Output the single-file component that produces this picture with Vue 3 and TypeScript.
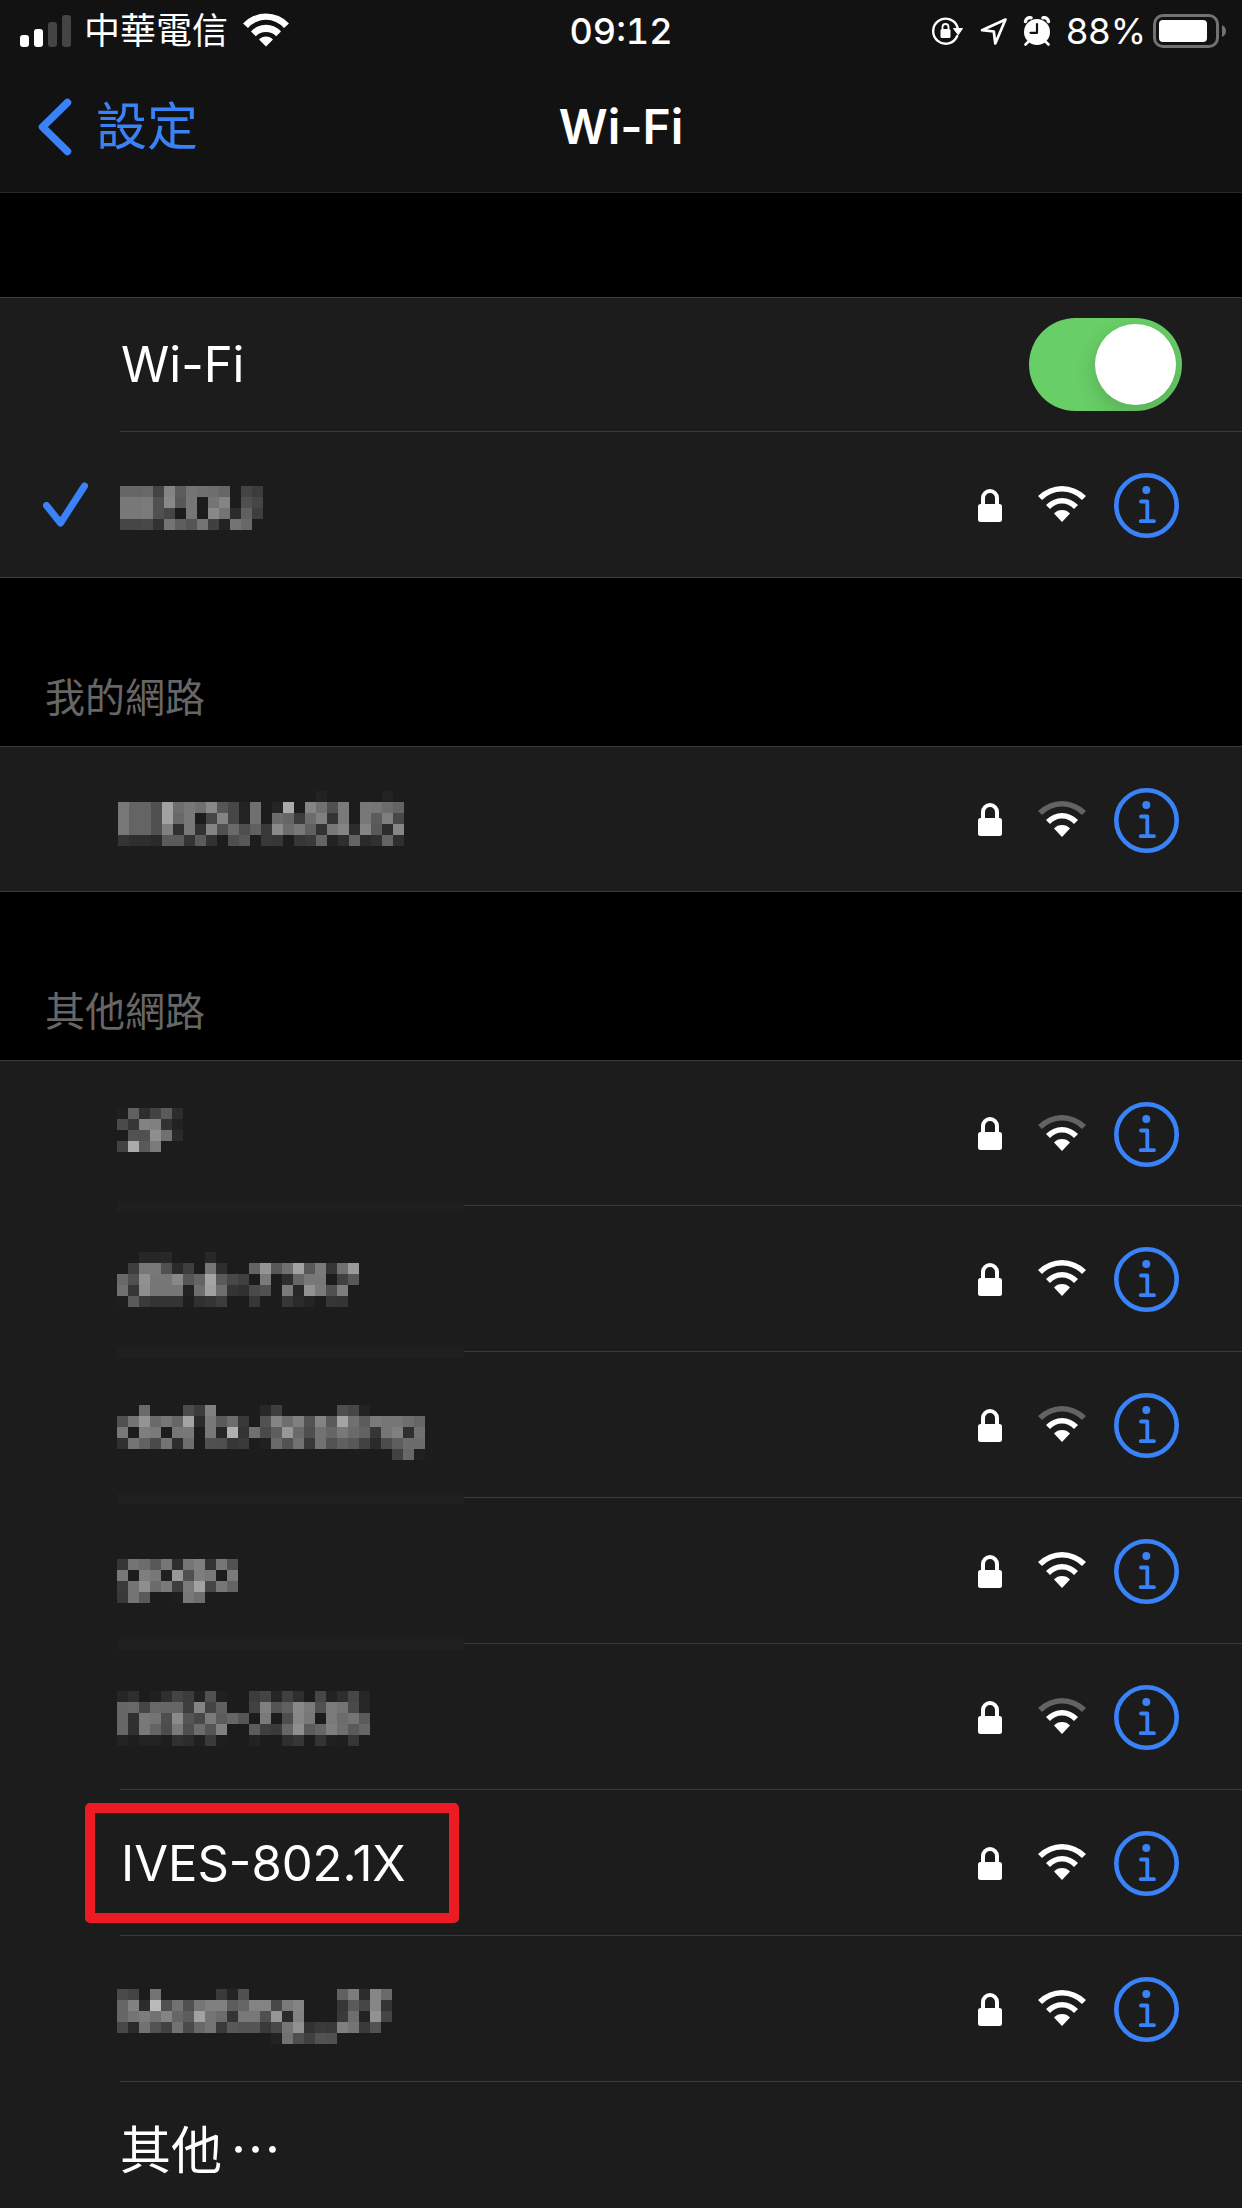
<script setup lang="ts">
import { ref } from 'vue'

interface Mosaic {
  x: number
  y: number
  rows: string[]
}

interface Cell {
  x: number
  y: number
  fill: string
}

interface Network {
  id: string
  name?: string
  mosaic?: Mosaic
  weak?: boolean
  current?: boolean
  marked?: boolean
  smudged?: boolean
}

interface Group {
  id: string
  title?: string
  networks: Network[]
}

const CELL = 11
const wifiOn = ref(true)

// Each mosaic row lists grey levels in hex; "1c" is the row background.
function cells(m: Mosaic): Cell[] {
  const out: Cell[] = []
  m.rows.forEach((line, r) => {
    line.split(' ').forEach((v, c) => {
      if (v !== '1c') out.push({ x: m.x + c * CELL, y: m.y + r * CELL, fill: `#${v}${v}${v}` })
    })
  })
  return out
}

function mosaicWidth(m: Mosaic): number {
  return m.x + Math.max(...m.rows.map((r) => r.split(' ').length)) * CELL
}

const groups: Group[] = [
  {
    id: 'current',
    networks: [
      {
        id: 'n0',
        current: true,
        mosaic: {
          x: 3,
          y: 25,
          rows: [
            '66 66 68 44 84 5c 74 70 6e 66 1c 44 3c',
            '78 78 7a 50 88 58 76 1c 74 84 1c 50 46',
            '78 78 7a 50 46 1c 76 1c 88 74 2c 60 3e',
            '46 46 48 32 74 5e 54 74 40 22 74 68 1c',
          ],
        },
      },
    ],
  },
  {
    id: 'mine',
    title: '我的網路',
    networks: [
      {
        id: 'n1',
        weak: true,
        mosaic: {
          x: 1,
          y: 16,
          rows: [
            '1c 1c 1c 1c 1c 1c 1c 1c 1c 1c 1c 1c 1c 1c 1c 1c 1c 1c 22 1c 1c 1c 1c 1c 22 1c',
            '78 64 64 50 a2 6e 78 70 88 56 46 22 70 1c 24 aa 1c 84 70 50 7a 1c 78 76 6c 64',
            '78 64 64 50 a2 68 78 1c 46 84 46 22 70 1c 6c 66 3c 6c 80 34 7a 1c 78 5c 7e 48',
            '78 64 64 50 80 30 78 32 84 50 6a 4e 60 38 8a 6c 78 60 32 78 84 2c 84 58 2c 86',
            '34 2e 2e 2a 5a 5a 34 5a 32 1c 4e 58 1c 38 36 1c 36 3a 64 22 2e 64 2a 30 64 2e',
          ],
        },
      },
    ],
  },
  {
    id: 'others',
    title: '其他網路',
    networks: [
      {
        id: 'n2',
        weak: true,
        smudged: true,
        mosaic: {
          x: 0,
          y: 19,
          rows: [
            '1f 60 2e 42 5a 2c',
            '4a 36 82 80 32 22',
            '1c 52 50 8e 70 2a',
            '42 aa 5a 7a 1c 1c',
          ],
        },
      },
      {
        id: 'n3',
        smudged: true,
        mosaic: {
          x: 0,
          y: 17,
          rows: [
            '1c 1c 26 26 28 1c 1c 1c 28',
            '1c 3e 78 78 50 2a 3e 1c 76 2e 1c 1c 64 94 58 70 a2 58 7a 36 70 9a',
            '68 50 90 76 76 88 56 64 a4 5a 48 40 1c 7a 1c 2e 66 78 78 1c 40 58',
            '70 36 8e 76 76 76 22 6e a0 6e 34 30 4a 50 1c 7a 28 92 7a 50 7e 1c',
            '1e 5a 3a 34 34 34 1e 30 34 3c 1c 1c 36 1c 1c 36 2a 24 1c 36 34 1c',
          ],
        },
      },
      {
        id: 'n4',
        weak: true,
        smudged: true,
        mosaic: {
          x: 0,
          y: 24,
          rows: [
            '1c 1c 6a 1c 1c 1c 4c 3c 80 1c 1c 1c 1c 28 3e 1c 1c 1c 1c 1c 4e 46 22',
            '50 74 94 6a 76 66 a4 2a 78 5a 6c 38 1c 52 84 6e 80 52 84 5a a4 70 5c 7a 76 76 6e 66',
            '78 1c 7e 7a 1c 76 78 1c 78 26 b0 34 70 4a 5e 98 6a 4e 72 66 78 6a 62 36 76 80 30 70',
            '30 74 62 4a 74 2e 6e 1c 50 4e 36 3a 1c 20 6a 52 72 38 72 52 60 58 42 2a 4c 5e 6c 6c',
            '1c 1c 1c 1c 1c 1c 1c 1c 1c 1c 1c 1c 1c 1c 1c 1c 1c 1c 1c 1c 1c 1c 1c 1c 1c 42 68 20',
          ],
        },
      },
      {
        id: 'n5',
        smudged: true,
        mosaic: {
          x: 0,
          y: 32,
          rows: [
            '36 74 6c 58 76 2e 76 80 34 76 52',
            '78 1c 7e 78 20 98 50 7e 78 1c 7a',
            '3a 74 8e 6c 7a 3e 7a a2 46 76 64',
            '38 74 5a 1c 1c 1e 78 6e 1c 1c 1c',
          ],
        },
      },
      {
        id: 'n6',
        weak: true,
        mosaic: {
          x: 0,
          y: 18,
          rows: [
            '26 2e 1c 20 2e 44 3c 22 50 20 1c 1c 3c 44 26 40 2e 1c 46 22 2e 46 26',
            '66 68 46 68 66 66 3e 84 44 60 1c 1c 42 80 54 60 88 7a 50 7a 74 4a 26',
            '66 30 78 74 4e 8a 54 48 7a 5c 66 56 1c 7a 1c 4e 86 78 1c 7a 6c 74 5a',
            '66 30 78 64 4c 7a 4e 6c 54 80 1c 1c 5c 3e 3a 66 8e 5c 66 7e 6e 5a 66',
            '22 1e 22 22 1e 30 2c 20 3a 1e 1c 1c 22 1c 1c 2e 36 1c 34 20 1e 36 1c',
          ],
        },
      },
      { id: 'n7', name: 'IVES-802.1X', marked: true },
      {
        id: 'n8',
        mosaic: {
          x: 0,
          y: 24,
          rows: [
            '4a 44 1c 74 1c 1c 1c 1c 1c 3a 24 50 1c 1c 1c 1c 1c 1c 1c 1c 60 7c 2c 86 6a',
            '66 82 2c ba 50 72 50 76 80 80 5c 66 84 84 48 7a 84 1c 1c 1c 36 5a 46 86 34',
            '66 74 7c 72 84 66 5c a2 74 6c 34 78 78 50 96 2a 82 1c 1c 1c 3a 6e 22 92 44',
            '48 2a 72 52 42 72 4a 68 74 3a 58 54 54 3a 48 76 90 32 3a 38 80 74 3a 52 1c',
            '1c 1c 1c 1c 1c 1c 1c 1c 1c 1c 1c 1c 1c 1c 22 72 4e 40 52 50',
          ],
        },
      },
    ],
  },
]
</script>

<template>
  <div class="screen" lang="zh-TW">
    <header class="top">
      <div class="status">
        <div class="status-left">
          <svg class="signal" width="52" height="32" viewBox="0 0 52 32" aria-hidden="true">
            <rect x="0" y="20" width="9" height="12" rx="3" fill="#fff" />
            <rect x="14" y="14" width="9" height="18" rx="3" fill="#fff" />
            <rect x="28" y="7" width="9" height="25" rx="3" fill="#444" />
            <rect x="42" y="0" width="9" height="32" rx="3" fill="#444" />
          </svg>
          <span class="carrier">中華電信</span>
          <svg width="46" height="36" viewBox="0 0 46 36" fill="#fff" aria-hidden="true">
            <path d="M0 10.5A31.5 31.5 0 0 1 46 10.5L41 15A24 24 0 0 0 5 15Z" />
            <path d="M8 18.5A20 20 0 0 1 38 18.5L33.2 23.2A14.5 14.5 0 0 0 12.8 23.2Z" />
            <path d="M16 26.5A9.5 9.5 0 0 1 30 26.5L23 33.5Z" />
          </svg>
        </div>
        <time class="clock">09:12</time>
        <div class="status-right">
          <svg class="rotation" width="32" height="30" viewBox="0 0 32 30" aria-hidden="true">
            <path d="M26.2 20A12.5 12.5 0 1 1 26.6 11.5" fill="none" stroke="#fff" stroke-width="2.4" stroke-linecap="round" />
            <path d="M22.5 12.5H31.5L27.2 18.8Z" fill="#fff" stroke="#fff" stroke-linejoin="round" />
            <rect x="9.5" y="13" width="10" height="9" rx="1.5" fill="#fff" />
            <path d="M11.5 13.5V11a3 3 0 0 1 6 0V13.5" fill="none" stroke="#fff" stroke-width="1.8" />
          </svg>
          <svg class="location" width="28" height="29" viewBox="0 0 28 29" aria-hidden="true">
            <path d="M25.5 2.5L2 13.2L13.8 14.5L15.3 26.5Z" fill="none" stroke="#fff" stroke-width="2.7" stroke-linejoin="round" />
          </svg>
          <svg class="alarm" width="28" height="30" viewBox="0 0 28 30" aria-hidden="true">
            <circle cx="14" cy="16" r="13" fill="#fff" />
            <path d="M2.5 5.5A4.5 4.5 0 0 1 8 1.8M25.5 5.5A4.5 4.5 0 0 0 20 1.8" fill="none" stroke="#fff" stroke-width="3.4" stroke-linecap="round" />
            <path d="M5 26L2.5 28.5M23 26L25.5 28.5" stroke="#fff" stroke-width="2.6" stroke-linecap="round" />
            <path d="M14 8V16.8H7.5" fill="none" stroke="#121212" stroke-width="2.2" stroke-linecap="round" stroke-linejoin="round" />
          </svg>
          <span class="percent">88%</span>
          <svg width="73" height="34" viewBox="0 0 73 34" aria-hidden="true">
            <rect x="1.5" y="1.5" width="63" height="31" rx="8.5" fill="none" stroke="#727272" stroke-width="3" />
            <rect x="6" y="6" width="48" height="22" rx="4" fill="#fff" />
            <path d="M69 11Q73 13 73 17Q73 21 69 23Z" fill="#727272" />
          </svg>
        </div>
      </div>
      <nav class="nav">
        <a class="back" href="#">
          <svg width="34" height="58" viewBox="0 0 34 58" aria-hidden="true">
            <path d="M29.5 4.5L4.5 29L29.5 53.5" fill="none" stroke="#3a82f7" stroke-width="7.5" stroke-linecap="round" stroke-linejoin="round" />
          </svg>
          <span>設定</span>
        </a>
        <h1 class="title">Wi-Fi</h1>
      </nav>
    </header>

    <main>
      <section v-for="g in groups" :key="g.id" class="group">
        <h2 class="group-title">{{ g.title }}</h2>
        <ul class="list">
          <li v-if="g.id === 'current'" class="row row-short">
            <div class="lead"></div>
            <div class="body">
              <label class="name" for="wifi-switch">Wi-Fi</label>
              <input id="wifi-switch" v-model="wifiOn" class="switch" type="checkbox" role="switch" />
            </div>
          </li>
          <li
            v-for="n in g.networks"
            :key="n.id"
            class="row"
            :class="{ marked: n.marked, smudged: n.smudged }"
          >
            <div class="lead">
              <svg v-if="n.current" width="46" height="46" viewBox="0 0 46 46" aria-hidden="true">
                <path d="M3.5 23.5L17.5 41L41.5 4" fill="none" stroke="#3a82f7" stroke-width="7" stroke-linecap="round" stroke-linejoin="round" />
              </svg>
            </div>
            <div class="body">
              <span v-if="n.name" class="name">{{ n.name }}</span>
              <svg
                v-else-if="n.mosaic"
                class="mosaic"
                :width="mosaicWidth(n.mosaic)"
                height="90"
                shape-rendering="crispEdges"
                aria-hidden="true"
              >
                <rect
                  v-for="(c, i) in cells(n.mosaic)"
                  :key="i"
                  :x="c.x"
                  :y="c.y"
                  width="11"
                  height="11"
                  :fill="c.fill"
                />
              </svg>
              <div class="tools">
                <svg width="24" height="34" viewBox="0 0 24 34" aria-hidden="true">
                  <rect x="0" y="15" width="24" height="18" rx="2.5" fill="#fff" />
                  <path d="M5 16V9a7 7 0 0 1 14 0V16" fill="none" stroke="#fff" stroke-width="4" />
                </svg>
                <svg class="strength" width="48" height="39" viewBox="0 0 48 39" fill="#fff" aria-hidden="true">
                  <path :fill="n.weak ? '#636363' : '#fff'" d="M0 10A34 34 0 0 1 48 10L44 14A28 28 0 0 0 4 14Z" />
                  <path d="M8 19A22 22 0 0 1 40 19L36 23A16 16 0 0 0 12 23Z" />
                  <path d="M16 27.5A11 11 0 0 1 32 27.5L24 36Z" />
                </svg>
                <button class="info" type="button" aria-label="資訊">
                  <svg width="65" height="65" viewBox="0 0 65 65" aria-hidden="true">
                    <circle cx="32.5" cy="32.5" r="30.2" fill="none" stroke="#3a82f7" stroke-width="4.6" />
                    <circle cx="32.3" cy="17" r="4" fill="#3a82f7" />
                    <path d="M27 28.5H33.3V48M26.7 48.2H40" fill="none" stroke="#3a82f7" stroke-width="3.8" stroke-linecap="round" stroke-linejoin="round" />
                  </svg>
                </button>
              </div>
            </div>
          </li>
          <li v-if="g.id === 'others'" class="row row-short">
            <div class="lead"></div>
            <div class="body">
              <a class="other" href="#">其他<span class="dots">…</span></a>
            </div>
          </li>
        </ul>
      </section>
    </main>
  </div>
</template>

<style>
body {
  margin: 0;
  background: #000;
}
</style>

<style scoped>
.screen {
  height: 100vh;
  overflow: hidden;
  background: #000;
  color: #fff;
  font-family: Inter, 'Noto Sans CJK TC', sans-serif;
  font-weight: 400;
}

svg {
  display: block;
  flex: none;
}

.top {
  background: #121212;
  border-bottom: 1px solid #2a2a2a;
}

.status {
  display: grid;
  grid-template-columns: 1fr auto 1fr;
  align-items: center;
  height: 62px;
  padding: 0 16px;
  font-size: 36px;
  line-height: 40px;
}

.status-left,
.status-right {
  display: flex;
  align-items: center;
}

.status-right {
  justify-content: flex-end;
}

.signal {
  margin-left: 4px;
}

.carrier {
  margin: 0 15px 0 12px;
}

.clock {
  font-weight: 500;
  font-variant-numeric: tabular-nums;
}

.rotation {
  margin-right: 17px;
}

.location {
  margin-right: 15px;
}

.alarm {
  margin-right: 15px;
}

.percent {
  margin-right: 7px;
}

.nav {
  display: grid;
  grid-template-columns: 1fr auto 1fr;
  align-items: center;
  height: 130px;
  padding: 0 38px;
  font-size: 51px;
  line-height: 60px;
}

.back {
  display: flex;
  align-items: center;
  gap: 24px;
  color: #3a82f7;
  text-decoration: none;
}

.title {
  margin: 0;
  font-size: 48px;
  font-weight: 600;
}

.group-title {
  display: flex;
  align-items: flex-end;
  box-sizing: border-box;
  height: 168px;
  margin: 0;
  padding: 0 45px 20px;
  color: #666;
  font-size: 40px;
  font-weight: 400;
  line-height: 56px;
}

.group:first-child .group-title {
  height: 104px;
}

.list {
  margin: 0;
  padding: 0;
  list-style: none;
  background: #1c1c1c;
  border-top: 1px solid #3b3b3b;
  border-bottom: 1px solid #3b3b3b;
}

.row {
  position: relative;
  display: grid;
  grid-template-columns: 120px 1fr;
  height: 146px;
}

.row:first-child,
.row:last-child {
  height: 145px;
}

.row:only-child {
  height: 144px;
}

.row.row-short {
  height: 134px;
}

.lead {
  display: flex;
  align-items: center;
  justify-content: flex-end;
  padding-right: 31px;
}

.body {
  display: flex;
  align-items: center;
  justify-content: space-between;
  padding: 2px 63px 0 0;
  border-bottom: 1px solid #3b3b3b;
}

.row:last-child .body {
  border-bottom: 0;
}

.row-short .body {
  padding: 0 60px 0 0;
}

.name {
  padding-left: 1px;
  font-size: 49px;
  line-height: 60px;
}

.other {
  color: #fff;
  font-size: 51px;
  line-height: 60px;
  text-decoration: none;
}

.dots {
  margin-left: 8px;
  font-family: 'Noto Sans CJK TC', sans-serif;
}

.mosaic {
  margin-left: -3px;
}

.tools {
  display: flex;
  align-items: center;
}

.strength {
  margin: 0 28px 0 36px;
}

.info {
  padding: 0;
  border: 0;
  background: none;
}

.switch {
  appearance: none;
  width: 153px;
  height: 93px;
  margin: 0;
  padding: 6px;
  border-radius: 47px;
  background: #39393d;
  box-sizing: border-box;
}

.switch::before {
  content: '';
  display: block;
  width: 81px;
  height: 81px;
  border-radius: 50%;
  background: #fff;
  box-shadow: 0 8px 22px rgba(0, 0, 0, 0.16);
}

.switch:checked {
  overflow: hidden;
  background: #68ce67;
}

.switch:checked::before {
  margin-left: 60px;
}

/* Pixelated remains of the separator under a censored name */
.smudged::after {
  content: '';
  position: absolute;
  z-index: 1;
  left: 117px;
  bottom: -6px;
  width: 347px;
  height: 11px;
  background: #1f1f1f;
}

/* Red annotation frame */
.marked::after {
  content: '';
  position: absolute;
  top: 13px;
  left: 85px;
  box-sizing: border-box;
  width: 374px;
  height: 120px;
  border: 10px solid #ed1c24;
  border-radius: 5px;
}
</style>
